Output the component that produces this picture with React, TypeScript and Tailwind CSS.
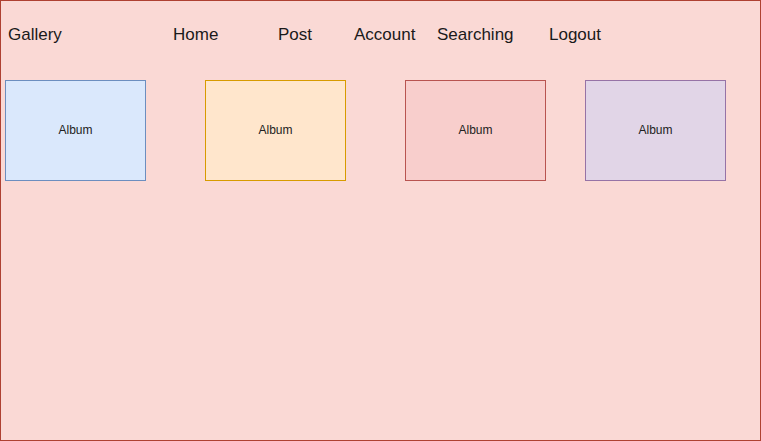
const navItems = [
  { label: "Gallery", width: "w-[165px]" },
  { label: "Home", width: "w-[105px]" },
  { label: "Post", width: "w-[76px]" },
  { label: "Account", width: "w-[83px]" },
  { label: "Searching", width: "w-[112px]" },
  { label: "Logout", width: "w-[80px]" },
];

const albums = [
  { fill: "bg-[#dae8fc]", stroke: "border-[#6c8ebf]", gap: "" },
  { fill: "bg-[#ffe6cc]", stroke: "border-[#d79b00]", gap: "ml-[59px]" },
  { fill: "bg-[#f8cecc]", stroke: "border-[#b85450]", gap: "ml-[59px]" },
  { fill: "bg-[#e1d5e7]", stroke: "border-[#9673a6]", gap: "ml-[39px]" },
];

export default function App() {
  return (
    <div
      className="w-[761px] h-[441px] bg-[#fad9d5] border border-[#ae4132] text-[#1a1a1a]"
      style={{ fontFamily: '"Liberation Sans", Arial, sans-serif' }}
    >
      {/* top nav */}
      <nav className="flex pt-[24px] pl-[7px]">
        {navItems.map((item) => (
          <div key={item.label} className={`${item.width} text-[17px] leading-[20px] whitespace-nowrap`}>
            {item.label}
          </div>
        ))}
      </nav>

      {/* albums */}
      <div className="flex mt-[35px] pl-[4px]">
        {albums.map((a, i) => (
          <div
            key={i}
            className={`${a.fill} ${a.stroke} ${a.gap} w-[141px] h-[101px] border flex items-center justify-center pb-[2px] text-[12px] text-[#222]`}
          >
            Album
          </div>
        ))}
      </div>
    </div>
  );
}
